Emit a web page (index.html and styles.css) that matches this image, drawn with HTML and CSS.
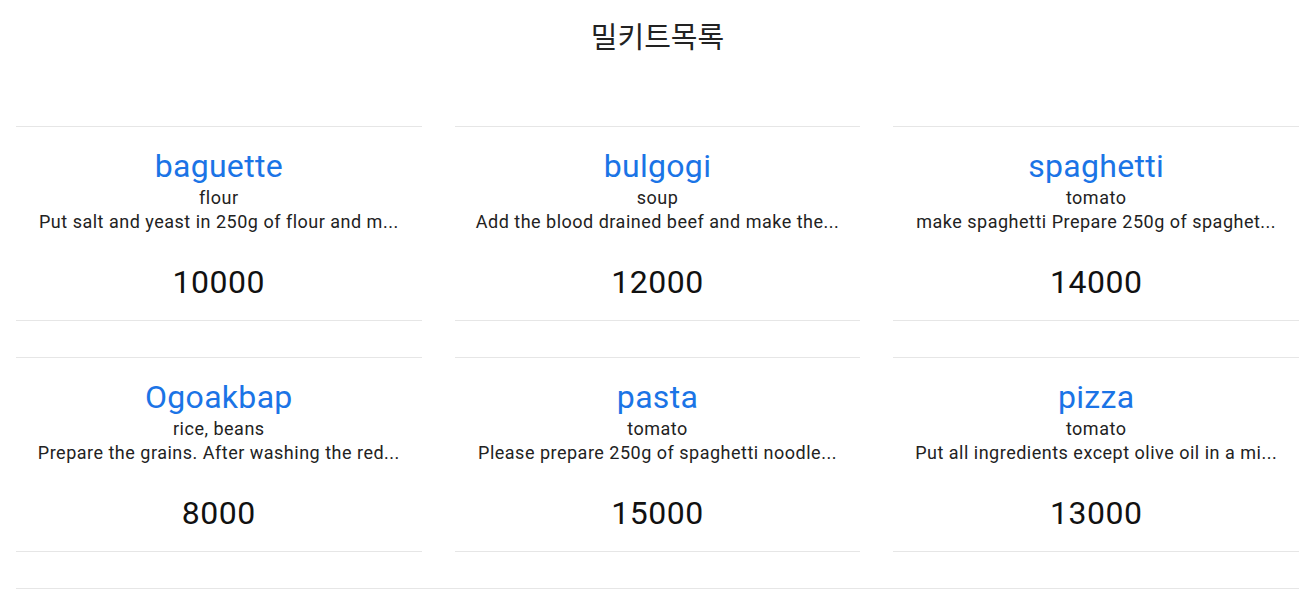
FILE: index.html
```html
<!DOCTYPE html>
<html lang="ko">
<head>
<meta charset="utf-8">
<title>밀키트목록</title>
<link rel="stylesheet" href="styles.css">
</head>
<body>
<header class="page-header">
  <h1 class="page-title">밀키트목록</h1>
</header>
<main class="kit-grid">
  <article class="kit-card">
    <h2 class="kit-name">baguette</h2>
    <p class="kit-ingredient">flour</p>
    <p class="kit-desc">Put salt and yeast in 250g of flour and m...</p>
    <p class="kit-price">10000</p>
  </article>
  <article class="kit-card">
    <h2 class="kit-name">bulgogi</h2>
    <p class="kit-ingredient">soup</p>
    <p class="kit-desc">Add the blood drained beef and make the...</p>
    <p class="kit-price">12000</p>
  </article>
  <article class="kit-card">
    <h2 class="kit-name">spaghetti</h2>
    <p class="kit-ingredient">tomato</p>
    <p class="kit-desc">make spaghetti Prepare 250g of spaghet...</p>
    <p class="kit-price">14000</p>
  </article>
  <article class="kit-card">
    <h2 class="kit-name">Ogoakbap</h2>
    <p class="kit-ingredient">rice, beans</p>
    <p class="kit-desc">Prepare the grains. After washing the red...</p>
    <p class="kit-price">8000</p>
  </article>
  <article class="kit-card">
    <h2 class="kit-name">pasta</h2>
    <p class="kit-ingredient">tomato</p>
    <p class="kit-desc">Please prepare 250g of spaghetti noodle...</p>
    <p class="kit-price">15000</p>
  </article>
  <article class="kit-card">
    <h2 class="kit-name">pizza</h2>
    <p class="kit-ingredient">tomato</p>
    <p class="kit-desc">Put all ingredients except olive oil in a mi...</p>
    <p class="kit-price">13000</p>
  </article>
</main>
<footer class="page-footer"></footer>
</body>
</html>
```

FILE: styles.css
```css
* {
  box-sizing: border-box;
}

html, body {
  margin: 0;
  padding: 0;
  background: #ffffff;
}

body {
  font-family: "Roboto", "Noto Sans CJK KR", sans-serif;
  color: #222222;
  padding: 0 13px 0 16px;
}

.page-header {
  padding-top: 15px;
  height: 126px;
}

.page-title {
  margin: 0;
  text-align: center;
  font-family: "Noto Sans CJK KR", "Noto Sans", sans-serif;
  font-weight: 400;
  font-size: 29px;
  line-height: 40px;
  color: #222222;
}

.kit-grid {
  display: grid;
  grid-template-columns: repeat(3, 1fr);
  column-gap: 33px;
  row-gap: 36px;
}

.kit-card {
  border-top: 1px solid #e6e6e6;
  border-bottom: 1px solid #e6e6e6;
  padding: 19px 14px 18px;
  text-align: center;
  min-width: 0;
}

.kit-name {
  margin: 0;
  font-weight: 400;
  font-size: 32px;
  letter-spacing: 0.3px;
  line-height: 40px;
  color: #1b74e6;
}

.kit-ingredient,
.kit-desc {
  margin: 0;
  font-size: 18px;
  letter-spacing: 0.5px;
  line-height: 24px;
  color: #222222;
}

.kit-desc {
  white-space: nowrap;
  overflow: hidden;
  text-overflow: ellipsis;
}

.kit-price {
  margin: 28px 0 0;
  font-size: 32px;
  letter-spacing: 0.5px;
  line-height: 40px;
  color: #111111;
}

.page-footer {
  margin-top: 36px;
  border-top: 1px solid #e6e6e6;
  height: 12px;
}
```
